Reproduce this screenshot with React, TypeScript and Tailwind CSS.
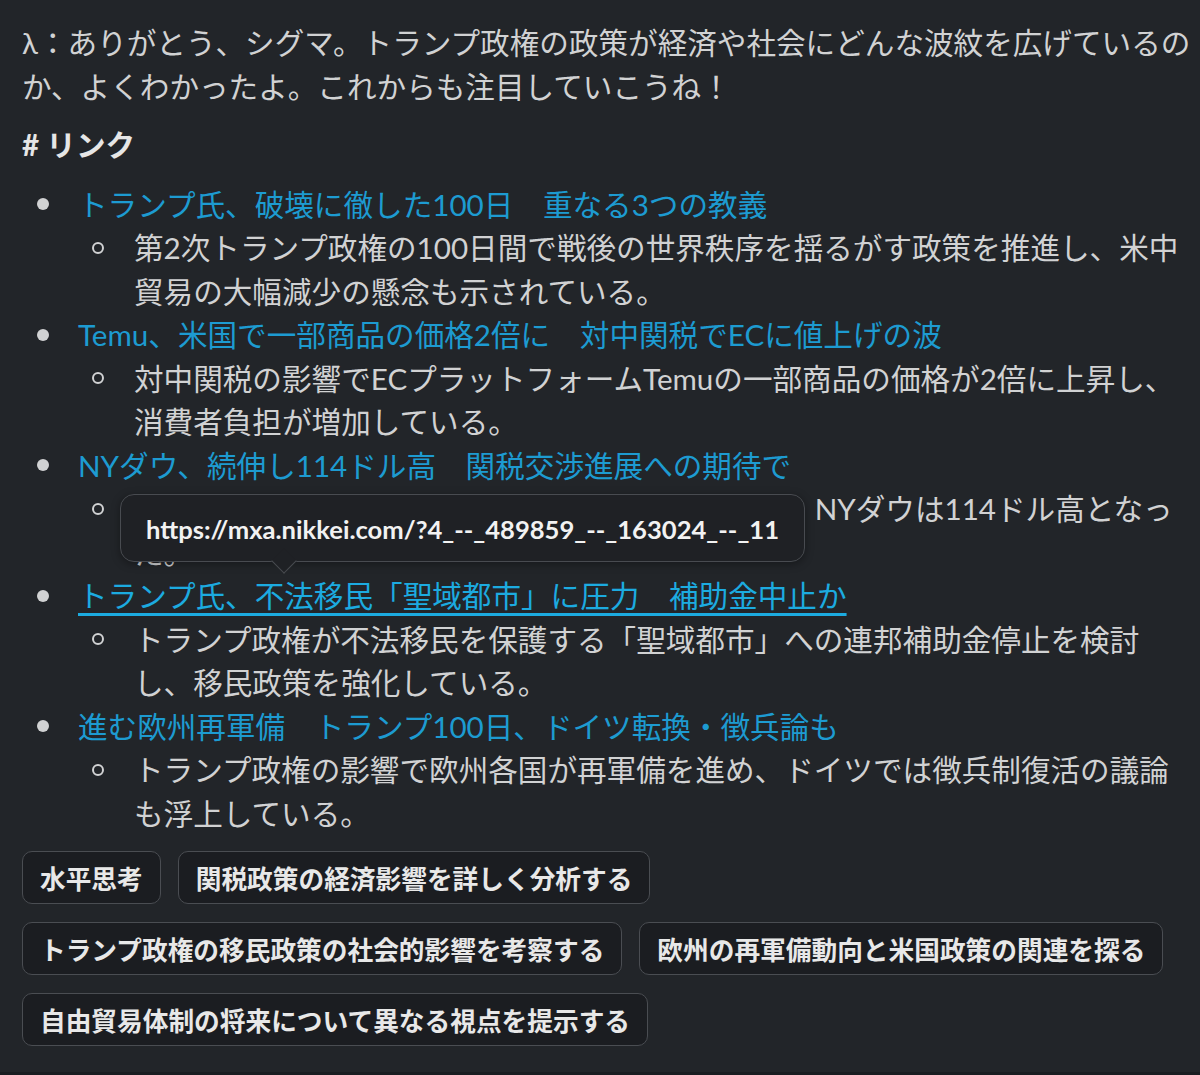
import React from "react";

const items = [
  {
    title: "トランプ氏、破壊に徹した100日　重なる3つの教義",
    sub: "第2次トランプ政権の100日間で戦後の世界秩序を揺るがす政策を推進し、米中貿易の大幅減少の懸念も示されている。",
  },
  {
    title: "Temu、米国で一部商品の価格2倍に　対中関税でECに値上げの波",
    sub: "対中関税の影響でECプラットフォームTemuの一部商品の価格が2倍に上昇し、消費者負担が増加している。",
  },
  {
    title: "NYダウ、続伸し114ドル高　関税交渉進展への期待で",
    sub: "関税交渉進展への期待から米国株式市場が上昇し、NYダウは114ドル高となった。",
  },
  {
    title: "トランプ氏、不法移民「聖域都市」に圧力　補助金中止か",
    sub: "トランプ政権が不法移民を保護する「聖域都市」への連邦補助金停止を検討し、移民政策を強化している。",
    hover: true,
  },
  {
    title: "進む欧州再軍備　トランプ100日、ドイツ転換・徴兵論も",
    sub: "トランプ政権の影響で欧州各国が再軍備を進め、ドイツでは徴兵制復活の議論も浮上している。",
  },
];

const buttons = [
  "水平思考",
  "関税政策の経済影響を詳しく分析する",
  "トランプ政権の移民政策の社会的影響を考察する",
  "欧州の再軍備動向と米国政策の関連を探る",
  "自由貿易体制の将来について異なる視点を提示する",
];

export default function App() {
  return (
    <div className="bg-[#1a1d21] min-h-[1075px] font-['Lato','Noto_Sans_CJK_JP',sans-serif]">
      <div className="relative h-[1072px] bg-[#222529] pl-[22px] pr-[7px] pt-[21px] text-[29.6px] leading-[43.5px] text-[#d1d2d3]">
        <p>λ：ありがとう、シグマ。トランプ政権の政策が経済や社会にどんな波紋を広げているのか、よくわかったよ。これからも注目していこうね！</p>
        <h3 className="mt-[15px] font-bold text-[#e6e6e6]"># リンク</h3>
        <ul className="mt-[16px]">
          {items.map((it, i) => (
            <li key={i}>
              <div className="flex">
                <div className="flex h-[43.5px] w-[56px] shrink-0 items-center">
                  <span className="ml-[15px] block h-[12px] w-[12px] rounded-full bg-[#d1d2d3]" />
                </div>
                <a
                  className={
                    it.hover
                      ? "text-[#1cabe0] underline decoration-[3px] underline-offset-[6px]"
                      : "text-[#1d9bd1]"
                  }
                >
                  {it.title}
                </a>
              </div>
              <div className="ml-[56px] flex">
                <div className="flex h-[43.5px] w-[56px] shrink-0 items-center">
                  <span className="ml-[14px] block h-[12px] w-[12px] rounded-full border-2 border-[#d1d2d3]" />
                </div>
                <span>{it.sub}</span>
              </div>
            </li>
          ))}
        </ul>
        <div className="mt-[16px] flex max-w-[1156px] flex-wrap gap-x-[17px] gap-y-[18px]">
          {buttons.map((b, i) => (
            <div
              key={i}
              className="flex h-[53px] items-center rounded-[10px] border border-[#4a4d52] bg-[#1b1d21] px-[17px] font-['Noto_Sans_CJK_JP',sans-serif] text-[25.7px] font-bold leading-none text-[#e8e8e8]"
            >
              {b}
            </div>
          ))}
        </div>

        <div className="absolute left-[120px] top-[494px] h-[68px] w-[685px] rounded-[14px] border-[1.5px] border-[#484b50] bg-[#1f2125] shadow-[0_2px_8px_rgba(0,0,0,0.35)]">
          <div className="flex h-full items-center justify-center pt-[3px] font-['Lato',sans-serif] text-[25.6px] font-bold text-[#f2f2f2]">
            https://mxa.nikkei.com/?4_--_489859_--_163024_--_11
          </div>
          <span className="absolute left-[154px] top-[57px] block h-[18px] w-[18px] rotate-45 border-b-[1.5px] border-r-[1.5px] border-[#484b50] bg-[#1f2125]" />
        </div>
      </div>
    </div>
  );
}
